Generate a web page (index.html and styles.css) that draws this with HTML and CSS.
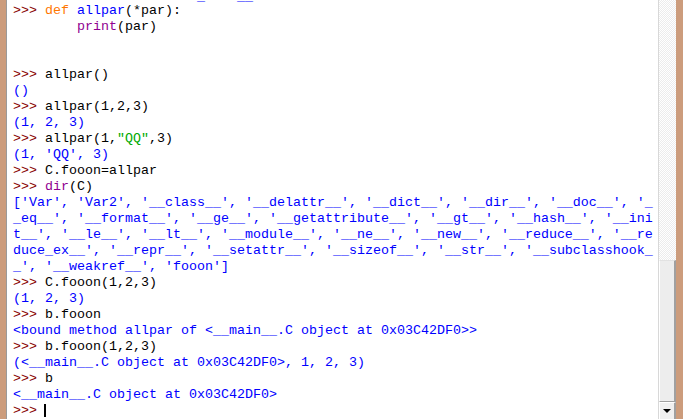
FILE: index.html
```html
<!DOCTYPE html>
<html>
<head>
<meta charset="utf-8">
<link rel="stylesheet" href="styles.css">
</head>
<body>
<div class="window">
  <div class="frame-left"></div>
  <div class="shell">
    <div class="lines">
<div class="row out ghost">                       _    __</div>
<div class="row"><span class="pr">&gt;&gt;&gt; </span><span class="kw">def</span> <span class="def">allpar</span>(*par):</div>
<div class="row">        <span class="bi">print</span>(par)</div>
<div class="row"> </div>
<div class="row"> </div>
<div class="row"><span class="pr">&gt;&gt;&gt; </span>allpar()</div>
<div class="row out">()</div>
<div class="row"><span class="pr">&gt;&gt;&gt; </span>allpar(1,2,3)</div>
<div class="row out">(1, 2, 3)</div>
<div class="row"><span class="pr">&gt;&gt;&gt; </span>allpar(1,<span class="str">"QQ"</span>,3)</div>
<div class="row out">(1, 'QQ', 3)</div>
<div class="row"><span class="pr">&gt;&gt;&gt; </span>C.fooon=allpar</div>
<div class="row"><span class="pr">&gt;&gt;&gt; </span><span class="bi">dir</span>(C)</div>
<div class="row out">['Var', 'Var2', '__class__', '__delattr__', '__dict__', '__dir__', '__doc__', '_</div>
<div class="row out">_eq__', '__format__', '__ge__', '__getattribute__', '__gt__', '__hash__', '__ini</div>
<div class="row out">t__', '__le__', '__lt__', '__module__', '__ne__', '__new__', '__reduce__', '__re</div>
<div class="row out">duce_ex__', '__repr__', '__setattr__', '__sizeof__', '__str__', '__subclasshook_</div>
<div class="row out">_', '__weakref__', 'fooon']</div>
<div class="row"><span class="pr">&gt;&gt;&gt; </span>C.fooon(1,2,3)</div>
<div class="row out">(1, 2, 3)</div>
<div class="row"><span class="pr">&gt;&gt;&gt; </span>b.fooon</div>
<div class="row out">&lt;bound method allpar of &lt;__main__.C object at 0x03C42DF0&gt;&gt;</div>
<div class="row"><span class="pr">&gt;&gt;&gt; </span>b.fooon(1,2,3)</div>
<div class="row out">(&lt;__main__.C object at 0x03C42DF0&gt;, 1, 2, 3)</div>
<div class="row"><span class="pr">&gt;&gt;&gt; </span>b</div>
<div class="row out">&lt;__main__.C object at 0x03C42DF0&gt;</div>
<div class="row"><span class="pr">&gt;&gt;&gt; </span><span class="caret"></span></div>
    </div>
  </div>
  <div class="scrollbar">
    <div class="track"></div>
    <div class="thumb"></div>
    <div class="btn-down"><span class="arrow"></span></div>
  </div>
  <div class="frame-right"></div>
</div>
</body>
</html>
```

FILE: styles.css
```css
html, body {
  margin: 0;
  padding: 0;
  background: #ffffff;
  overflow: hidden;
}

.window {
  display: flex;
  width: 683px;
  height: 419px;
  overflow: hidden;
}

.frame-left {
  width: 6px;
  flex: none;
  background: #cc9c7c;
  border-right: 1px solid #9a9a9a;
}

.shell {
  flex: 1;
  min-width: 0;
  overflow: hidden;
  background: #ffffff;
  padding-left: 6px;
}

.lines {
  margin-top: -13px;
  font-family: "Liberation Mono", "Courier New", monospace;
  font-size: 13.333px;
  line-height: 16px;
  color: #000000;
}

.row {
  height: 16px;
  white-space: pre;
}

.ghost {
  line-height: 20px;
}

.pr { color: #880000; }
.kw { color: #ff7700; }
.def { color: #0000ff; }
.bi { color: #900090; }
.str { color: #00aa00; }
.out { color: #0000ff; }

.caret {
  display: inline-block;
  width: 2px;
  height: 13px;
  background: #000000;
  vertical-align: -3px;
  margin-left: -1px;
}

.scrollbar {
  width: 17px;
  flex: none;
  display: flex;
  flex-direction: column;
  border-left: 1px solid #d8d8d8;
}

.track {
  flex: 1;
  background: repeating-conic-gradient(#ffffff 0 25%, #ececec 0 50%) 0 0 / 2px 2px;
}

.thumb {
  height: 142px;
  flex: none;
  box-sizing: border-box;
  background: #ededed;
  border-top: 1px solid #e2e2e2;
  border-left: 1px solid #ffffff;
  border-right: 2px solid #a0a0a0;
  border-bottom: 1px solid #a0a0a0;
}

.btn-down {
  height: 17px;
  flex: none;
  box-sizing: border-box;
  background: #f0f0f0;
  border-top: 1px solid #ffffff;
  border-left: 1px solid #ffffff;
  border-right: 2px solid #a0a0a0;
  display: flex;
  align-items: center;
  justify-content: center;
}

.arrow {
  width: 0;
  height: 0;
  border-left: 4px solid transparent;
  border-right: 4px solid transparent;
  border-top: 4px solid #000000;
}

.frame-right {
  width: 7px;
  flex: none;
  background: #cc9c7c;
}
```
